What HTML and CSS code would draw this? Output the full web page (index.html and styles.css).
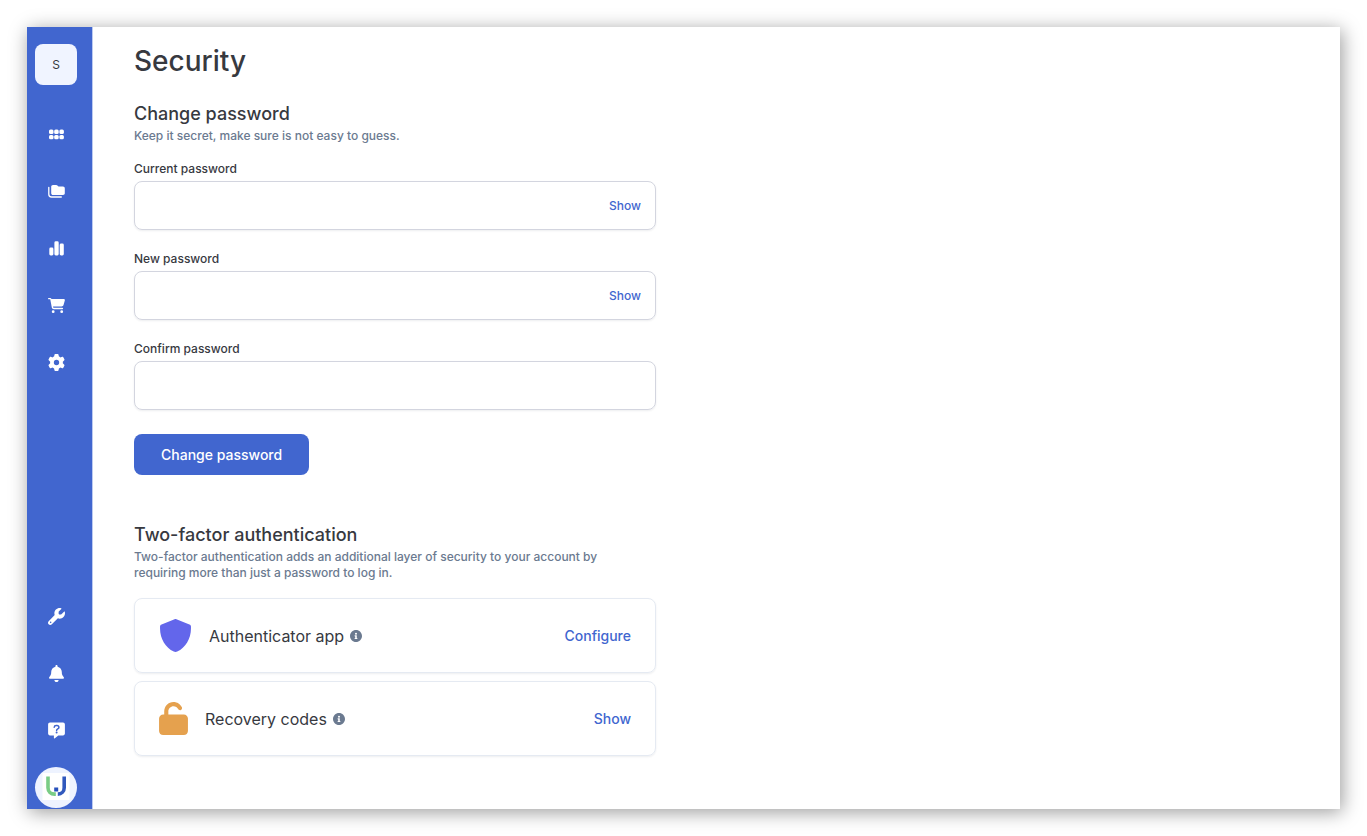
FILE: index.html
```html
<!DOCTYPE html>
<html lang="en">
<head>
<meta charset="utf-8">
<title>Security</title>
<meta name="viewport" content="width=device-width, initial-scale=1">
<link rel="stylesheet" href="styles.css">
</head>
<body>
<div class="window">
  <nav class="sidebar" aria-label="Main">
    <a class="workspace" href="#">S</a>
    <a class="nav-link" href="#" aria-label="Apps">
      <svg class="nav-icon" viewBox="0 0 17 17" fill="currentColor"><rect x="1" y="3.600" width="4.500" height="4.300" rx="1.500"/><rect x="6.200" y="3.600" width="4.500" height="4.300" rx="1.500"/><rect x="11.400" y="3.600" width="4.500" height="4.300" rx="1.500"/><rect x="1" y="8.900" width="4.500" height="4.300" rx="1.500"/><rect x="6.200" y="8.900" width="4.500" height="4.300" rx="1.500"/><rect x="11.400" y="8.900" width="4.500" height="4.300" rx="1.500"/></svg>
    </a>
    <a class="nav-link" href="#" aria-label="Projects">
      <svg class="nav-icon" viewBox="0 0 17 17" fill="currentColor"><path d="M5 2h3.200c.5 0 .9.200 1.200.5l.8.8c.2.200.4.300.7.300H15c1 0 1.800.8 1.800 1.800v4.900c0 1-.8 1.700-1.800 1.700H5c-1 0-1.800-.8-1.800-1.800V3.800C3.200 2.800 4 2 5 2z"/><path d="M.8 4.300v7c0 1.500 1.200 2.700 2.700 2.700h9.800" fill="none" stroke="currentColor" stroke-width="1.300" stroke-linecap="round"/></svg>
    </a>
    <a class="nav-link" href="#" aria-label="Statistics">
      <svg class="nav-icon" viewBox="0 0 17 17" fill="currentColor"><rect x="1.300" y="7.500" width="4.100" height="7.900" rx="1.400"/><rect x="6.400" y="1.300" width="4.300" height="14.100" rx="1.400"/><rect x="11.700" y="3.500" width="4.100" height="11.900" rx="1.400"/></svg>
    </a>
    <a class="nav-link" href="#" aria-label="Store">
      <svg class="nav-icon" viewBox="0 0 576 512" fill="currentColor"><path d="M0 24C0 10.700 10.700 0 24 0H69.500c22 0 41.500 12.800 50.600 32h411c26.300 0 45.500 25 38.600 50.400l-41 152.300c-8.500 31.400-37 53.300-69.500 53.300H170.700l5.400 28.500c2.200 11.300 12.100 19.500 23.600 19.500H488c13.300 0 24 10.700 24 24s-10.700 24-24 24H199.700c-34.600 0-64.300-24.600-70.700-58.500L77.400 54.500c-.7-3.800-4-6.500-7.900-6.500H24C10.700 48 0 37.300 0 24zM128 464a48 48 0 1 1 96 0 48 48 0 1 1-96 0zm336-48a48 48 0 1 1 0 96 48 48 0 1 1 0-96z"/></svg>
    </a>
    <a class="nav-link" href="#" aria-label="Settings">
      <svg class="nav-icon" viewBox="0 0 512 512" fill="currentColor"><path d="M495.900 166.600c3.200 8.700.5 18.400-6.400 24.600l-43.300 39.400c1.100 8.300 1.700 16.800 1.700 25.400s-.6 17.100-1.700 25.400l43.300 39.400c6.900 6.200 9.600 15.900 6.400 24.600-4.400 11.900-9.700 23.300-15.800 34.300l-4.700 8.100c-6.600 11-14 21.400-22.100 31.200-5.900 7.200-15.700 9.600-24.500 6.800l-55.700-17.700c-13.400 10.300-28.200 18.900-44 25.400l-12.500 57.100c-2 9.100-9 16.300-18.200 17.800-13.800 2.300-28 3.500-42.500 3.500s-28.700-1.200-42.500-3.500c-9.200-1.500-16.200-8.700-18.200-17.800l-12.500-57.100c-15.800-6.500-30.600-15.100-44-25.400L83.100 425.900c-8.800 2.800-18.600.3-24.500-6.800-8.100-9.800-15.500-20.200-22.100-31.200l-4.700-8.100c-6.100-11-11.400-22.400-15.800-34.300-3.200-8.700-.5-18.400 6.400-24.600l43.300-39.400C64.600 273.100 64 264.600 64 256s.6-17.100 1.700-25.400L22.400 191.200c-6.900-6.200-9.600-15.900-6.400-24.600 4.400-11.900 9.700-23.300 15.800-34.300l4.700-8.100c6.600-11 14-21.400 22.100-31.200 5.900-7.200 15.700-9.600 24.500-6.800l55.700 17.700c13.400-10.300 28.200-18.900 44-25.400l12.500-57.100c2-9.100 9-16.300 18.200-17.800C227.300 1.200 241.500 0 256 0s28.700 1.200 42.500 3.500c9.200 1.500 16.200 8.700 18.200 17.800l12.500 57.100c15.800 6.500 30.600 15.100 44 25.400l55.700-17.700c8.800-2.800 18.600-.3 24.500 6.800 8.100 9.800 15.500 20.200 22.100 31.200l4.700 8.100c6.100 11 11.400 22.400 15.800 34.300zM256 336a80 80 0 1 0 0-160 80 80 0 1 0 0 160z"/></svg>
    </a>
    <div class="spacer"></div>
    <a class="nav-link" href="#" aria-label="Tools">
      <svg class="nav-icon" viewBox="0 0 512 512" fill="currentColor"><path d="M352 320c88.400 0 160-71.600 160-160 0-15.300-2.200-30.100-6.200-44.200-3.100-10.800-16.400-13.200-24.300-5.300l-76.800 76.800c-3 3-7.100 4.700-11.300 4.700H336c-8.800 0-16-7.200-16-16v-57.400c0-4.200 1.700-8.300 4.700-11.300l76.800-76.800c7.900-7.900 5.400-21.200-5.300-24.300C382.100 2.200 367.300 0 352 0c-88.400 0-160 71.600-160 160 0 19.100 3.400 37.500 9.500 54.500L19.900 396.100C7.200 408.800 0 426.100 0 444.100 0 481.600 30.400 512 67.900 512c18 0 35.300-7.200 48-19.900l181.600-181.600c17 6.200 35.400 9.500 54.500 9.500zM80 408a24 24 0 1 1 0 48 24 24 0 1 1 0-48z"/></svg>
    </a>
    <a class="nav-link" href="#" aria-label="Notifications">
      <svg class="nav-icon" viewBox="0 0 512 512" fill="currentColor"><path d="M256 0c-17.700 0-32 14.300-32 32v19.200C151 66 96 130.600 96 208v18.800c0 47-17.300 92.400-48.500 127.600l-7.400 8.300c-8.400 9.400-10.400 22.900-5.300 34.400S51.400 416 64 416h384c12.600 0 24-7.400 29.200-18.900s3.100-25-5.300-34.400l-7.400-8.300C433.300 319.200 416 273.900 416 226.800V208c0-77.400-55-142-128-156.800V32c0-17.700-14.300-32-32-32zm45.300 493.300c12-12 18.700-28.300 18.700-45.300H192c0 17 6.700 33.300 18.700 45.300S239 512 256 512s33.300-6.700 45.300-18.700z"/></svg>
    </a>
    <a class="nav-link" href="#" aria-label="Help">
      <svg class="nav-icon" viewBox="0 0 17 17"><path fill="currentColor" d="M2 .5h13c1.100 0 1.900.8 1.900 1.900v9.200c0 1.100-.8 1.900-1.900 1.900h-4.700l-3.700 2.900c-.3.200-.7 0-.7-.4v-2.500H2c-1.100 0-1.900-.8-1.900-1.900V2.400C.1 1.300.9.500 2 .5z"/><path class="cutout" d="M6.200 5.300c.1-1.100.9-1.700 2-1.700h.7c1.200 0 2 .8 2 1.800 0 1.600-2.300 1.500-2.300 3"/><circle class="cutout-dot" cx="8.600" cy="10.500" r="1"/></svg>
    </a>
    <a class="account" href="#" aria-label="Account">
      <svg class="account-logo" viewBox="0 0 41 41"><rect x="7" y="6" width="27" height="27" fill="#fff"/><path d="M12.500 9.500v11.200c0 3.800 2.800 6.400 6.600 6.400h1.200" fill="none" stroke="#79cc86" stroke-width="3.600"/><path d="M28.700 9.500v11.200c0 3.800-2.700 6.400-6.400 6.400" fill="none" stroke="#3159bd" stroke-width="3.600"/><rect x="18.700" y="20.500" width="4" height="4" fill="#2750bb"/></svg>
    </a>
  </nav>
  <main class="content">
    <h1 class="page-title">Security</h1>
    <section class="section">
      <h2 class="section-title">Change password</h2>
      <p class="section-note">Keep it secret, make sure is not easy to guess.</p>
      <form class="form">
        <div class="field">
          <label class="label" for="current">Current password</label>
          <div class="control"><input class="input" id="current" type="password"><button class="link-small" type="button">Show</button></div>
        </div>
        <div class="field">
          <label class="label" for="new">New password</label>
          <div class="control"><input class="input" id="new" type="password"><button class="link-small" type="button">Show</button></div>
        </div>
        <div class="field">
          <label class="label" for="confirm">Confirm password</label>
          <div class="control"><input class="input" id="confirm" type="password"></div>
        </div>
        <button class="submit" type="submit">Change password</button>
      </form>
    </section>
    <section class="section">
      <h2 class="section-title">Two-factor authentication</h2>
      <p class="section-note">Two-factor authentication adds an additional layer of security to your account by requiring more than just a password to log in.</p>
      <div class="cards">
        <div class="card">
          <svg class="card-icon shield" viewBox="0 0 512 512" fill="currentColor"><path d="M242 4c9-4 19-4 28 0l202 80c15 6 24 17 24 34v30c0 160-86 300-213 358-17 8-37 8-54 0C102 448 16 308 16 148v-30c0-17 9-28 24-34z"/></svg>
          <span class="card-name">Authenticator app</span>
          <svg class="info" viewBox="8 8 496 496" fill="currentColor"><path d="M256 8C119 8 8 119 8 256s111 248 248 248 248-111 248-248S393 8 256 8zm0 110a42 42 0 1 1 0 84 42 42 0 0 1 0-84zm56 254c0 6.600-5.400 12-12 12h-88c-6.600 0-12-5.400-12-12v-24c0-6.600 5.400-12 12-12h12v-64h-12c-6.600 0-12-5.400-12-12v-24c0-6.600 5.400-12 12-12h64c6.600 0 12 5.400 12 12v100h12c6.600 0 12 5.400 12 12z"/></svg>
          <button class="link" type="button">Configure</button>
        </div>
        <div class="card">
          <svg class="card-icon lock" viewBox="0 0 448 512" fill="currentColor"><path d="M144 144c0-44.200 35.800-80 80-80 31.900 0 59.400 18.600 72.300 45.700 7.600 16 26.700 22.800 42.600 15.200s22.800-26.700 15.200-42.600C331 33.700 281.500 0 224 0 144.500 0 80 64.500 80 144v48H64c-35.300 0-64 28.700-64 64v192c0 35.300 28.700 64 64 64h320c35.300 0 64-28.700 64-64V256c0-35.300-28.700-64-64-64H144z"/></svg>
          <span class="card-name">Recovery codes</span>
          <svg class="info" viewBox="8 8 496 496" fill="currentColor"><path d="M256 8C119 8 8 119 8 256s111 248 248 248 248-111 248-248S393 8 256 8zm0 110a42 42 0 1 1 0 84 42 42 0 0 1 0-84zm56 254c0 6.600-5.400 12-12 12h-88c-6.600 0-12-5.400-12-12v-24c0-6.600 5.400-12 12-12h12v-64h-12c-6.600 0-12-5.400-12-12v-24c0-6.600 5.400-12 12-12h64c6.600 0 12 5.400 12 12v100h12c6.600 0 12 5.400 12 12z"/></svg>
          <button class="link" type="button">Show</button>
        </div>
      </div>
    </section>
  </main>
</div>
</body>
</html>
```
FILE: styles.css
```css
* { box-sizing: border-box; }

body {
  margin: 0;
  padding: 27px;
  background: #fff;
  color: #37393f;
  font-family: Inter, "Liberation Sans", sans-serif;
}

h1, h2, p { margin: 0; font-weight: 500; }
button { border: 0; padding: 0; background: none; font: inherit; cursor: pointer; }

.window {
  display: flex;
  min-height: calc(100vh - 54px);
  background: #fff;
  box-shadow: 2px 3px 18px rgba(0, 0, 0, 0.4);
}

.sidebar {
  display: flex;
  flex-direction: column;
  gap: 16px;
  flex: none;
  width: 66px;
  padding: 17px 15px 1px 8px;
  background: #4166cf;
  border-right: 1px solid #bccaf0;
}

.workspace {
  display: flex;
  align-items: center;
  justify-content: center;
  height: 41px;
  margin-bottom: 13px;
  border-radius: 8px;
  background: #f0f4ff;
  color: #37393f;
  font-size: 12px;
  text-decoration: none;
}

.nav-link {
  display: flex;
  align-items: center;
  justify-content: center;
  height: 41px;
  color: #fff;
}

.nav-icon { width: 17px; height: 17px; }
.cutout { fill: none; stroke: #4166cf; stroke-width: 1.5; stroke-linecap: round; }
.cutout-dot { fill: #4166cf; }
.spacer { flex: 1; }

.account {
  height: 41px;
  border-radius: 50%;
  background: #eef3ff;
  overflow: hidden;
}

.account-logo { display: block; width: 100%; height: 100%; }

.content {
  flex: 1;
  min-width: 0;
  padding: 16px 41px 48px;
}

.page-title {
  margin-bottom: 23px;
  font-size: 28px;
  line-height: 36px;
}

.section { max-width: 522px; }
.section + .section { margin-top: 48px; }
.section-title { font-size: 18px; line-height: 24px; }

.section-note {
  max-width: 500px;
  margin: 2px 0 17px;
  color: #6b7a90;
  font-size: 12px;
  line-height: 16px;
}

.form {
  display: flex;
  flex-direction: column;
  align-items: flex-start;
  gap: 21px;
}

.field { width: 100%; }

.label {
  display: block;
  margin-bottom: 4px;
  font-size: 12px;
  font-weight: 500;
  line-height: 16px;
}

.control {
  display: flex;
  align-items: center;
  height: 49px;
  padding: 0 14px;
  border: 1px solid #d3d5df;
  border-radius: 8px;
  box-shadow: 0 1px 2px rgba(30, 40, 70, 0.08);
}

.input {
  flex: 1;
  min-width: 0;
  height: 100%;
  border: 0;
  outline: 0;
  background: none;
  font: inherit;
}

.link-small { color: #4166cf; font-size: 12px; font-weight: 500; }

.submit {
  height: 41px;
  margin-top: 3px;
  padding: 0 27px;
  border-radius: 8px;
  background: #4166cf;
  color: #fff;
  font-size: 14px;
  font-weight: 500;
}

.cards { display: flex; flex-direction: column; gap: 8px; }

.card {
  display: flex;
  align-items: center;
  height: 75px;
  padding: 0 24px;
  border: 1px solid #e5eaf2;
  border-radius: 8px;
  box-shadow: 0 1px 2px rgba(30, 40, 70, 0.08);
}

.card-icon { height: 33px; margin-right: 17px; }
.shield { width: 33px; color: #6366eb; }
.lock { width: 29px; color: #e5a14e; }
.card-name { font-size: 16px; }
.info { width: 12px; height: 12px; margin-left: 6px; color: #6b7a90; }
.link { margin-left: auto; color: #4166cf; font-size: 14px; font-weight: 500; }
```
